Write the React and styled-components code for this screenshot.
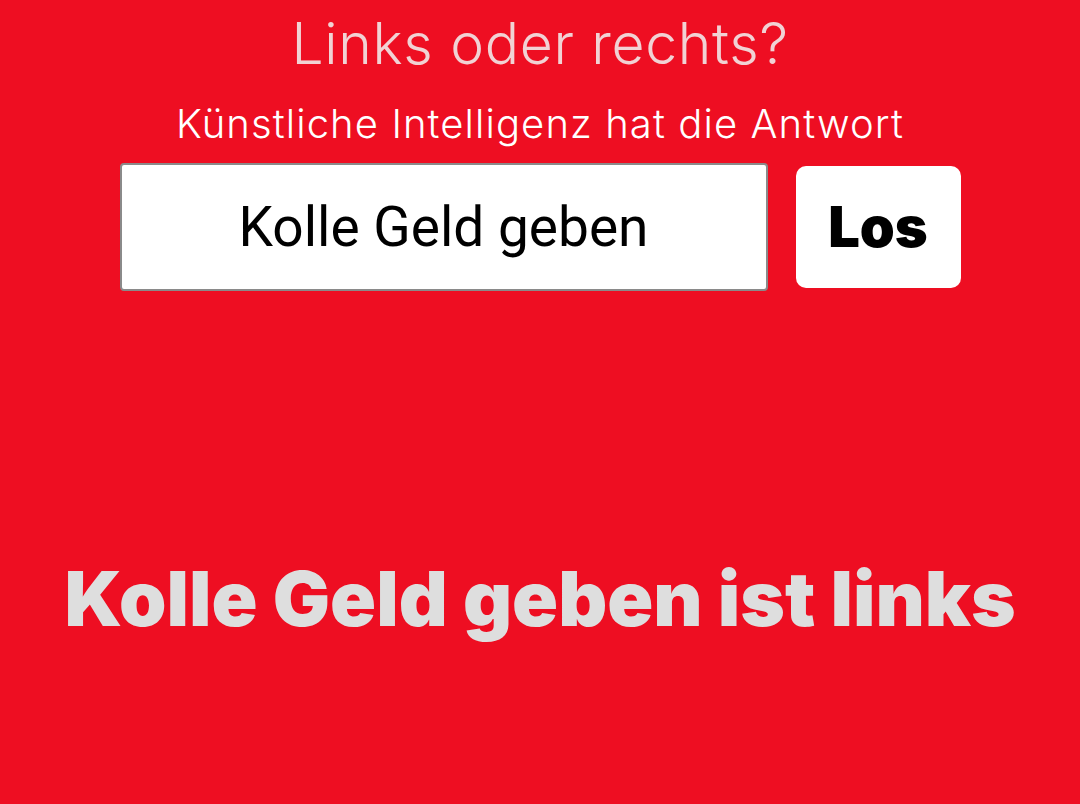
import React, { useState } from "react";
import styled, { createGlobalStyle } from "styled-components";

const GlobalStyle = createGlobalStyle`
  html, body {
    margin: 0;
    padding: 0;
    background: #ee0e22;
  }
  #root {
    min-height: 100vh;
  }
`;

const Page = styled.div`
  min-height: 804px;
  background: #ee0e22;
  display: flex;
  flex-direction: column;
  align-items: center;
  font-family: Inter, "Liberation Sans", sans-serif;
`;

const Title = styled.h1`
  margin: 12px 0 0;
  font-size: 57px;
  font-weight: 300;
  letter-spacing: 0.7px;
  line-height: 64px;
  color: #f1d2d4;
`;

const Subtitle = styled.h2`
  margin: 25px 0 0;
  font-size: 40px;
  font-weight: 300;
  letter-spacing: 1.1px;
  line-height: 46px;
  color: #ffffff;
`;

const Form = styled.form`
  margin-top: 16px;
  display: flex;
  align-items: center;
  gap: 28px;
`;

const Input = styled.input`
  box-sizing: border-box;
  width: 648px;
  height: 128px;
  border: 2px solid #8a8a8a;
  border-radius: 4px;
  background: #fff;
  font-family: Roboto, "Liberation Sans", sans-serif;
  font-size: 55px;
  color: #000;
  text-align: center;
  outline: none;
`;

const Button = styled.button`
  box-sizing: border-box;
  width: 165px;
  height: 122px;
  border: none;
  border-radius: 10px;
  background: #fff;
  font-family: Inter, "Liberation Sans", sans-serif;
  font-weight: 900;
  font-size: 56px;
  color: #000;
  cursor: pointer;
`;

const Result = styled.p`
  margin: 262px 0 0;
  font-size: 76px;
  font-weight: 900;
  line-height: 90px;
  color: #dedede;
`;

export default function App() {
  const [value, setValue] = useState("Kolle Geld geben");
  const [answer, setAnswer] = useState("Kolle Geld geben ist links");

  const handleSubmit = (e) => {
    e.preventDefault();
    setAnswer(`${value} ist links`);
  };

  return (
    <>
      <GlobalStyle />
      <Page>
        <Title>Links oder rechts?</Title>
        <Subtitle>Künstliche Intelligenz hat die Antwort</Subtitle>
        <Form onSubmit={handleSubmit}>
          <Input value={value} onChange={(e) => setValue(e.target.value)} />
          <Button type="submit">Los</Button>
        </Form>
        <Result>{answer}</Result>
      </Page>
    </>
  );
}
